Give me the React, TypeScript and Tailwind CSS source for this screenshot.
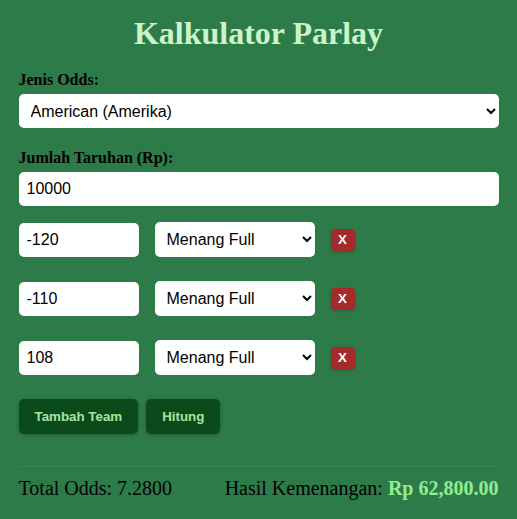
import { useState } from "react";

type Team = { odds: string; status: string };

const initialTeams: Team[] = [
  { odds: "-120", status: "full" },
  { odds: "-110", status: "full" },
  { odds: "108", status: "full" },
];

function StatusSelect({ value, onChange }: { value: string; onChange: (v: string) => void }) {
  return (
    <select
      value={value}
      onChange={(e) => onChange(e.target.value)}
      className="w-[160px] h-[35px] px-2 rounded-[5px] bg-white text-black text-[16px] font-['Liberation_Sans',Arial,sans-serif] outline-none"
    >
      <option value="full">Menang Full</option>
      <option value="half">Menang Setengah</option>
      <option value="draw">Seri</option>
      <option value="halflose">Kalah Setengah</option>
      <option value="lose">Kalah Full</option>
    </select>
  );
}

export default function App() {
  const [oddsType, setOddsType] = useState("american");
  const [stake, setStake] = useState("10000");
  const [teams, setTeams] = useState<Team[]>(initialTeams);

  const update = (i: number, patch: Partial<Team>) =>
    setTeams((t) => t.map((x, j) => (j === i ? { ...x, ...patch } : x)));

  return (
    <div className="min-h-screen bg-[#2e7b4a] font-['Liberation_Serif','Times_New_Roman',serif] text-black">
      <div className="w-[480px] mx-auto pt-[15px] pb-4">
        {/* Title */}
        <h1 className="text-[32px] leading-[37px] font-bold text-center text-[#c9f5c8]">
          Kalkulator Parlay
        </h1>

        {/* Odds type */}
        <label className="block mt-[19px] mb-[5px] text-[16px] leading-[18px] font-bold">
          Jenis Odds:
        </label>
        <select
          value={oddsType}
          onChange={(e) => setOddsType(e.target.value)}
          className="w-full h-[34px] px-2 rounded-[5px] bg-white text-black text-[16px] font-['Liberation_Sans',Arial,sans-serif] outline-none"
        >
          <option value="american">American (Amerika)</option>
          <option value="decimal">Decimal (Eropa)</option>
          <option value="hongkong">Hong Kong</option>
          <option value="malay">Malay</option>
          <option value="indo">Indonesia</option>
        </select>

        {/* Stake */}
        <label className="block mt-[21px] mb-[5px] text-[16px] leading-[18px] font-bold">
          Jumlah Taruhan (Rp):
        </label>
        <input
          value={stake}
          onChange={(e) => setStake(e.target.value)}
          className="block w-full h-[34px] px-2 rounded-[5px] bg-white text-black text-[16px] font-['Liberation_Sans',Arial,sans-serif] outline-none"
        />

        {/* Teams */}
        <div className="mt-[16px] flex flex-col gap-[24px]">
          {teams.map((team, i) => (
            <div key={i} className="flex items-center gap-4">
              <input
                value={team.odds}
                onChange={(e) => update(i, { odds: e.target.value })}
                className="w-[120px] h-[34px] px-2 rounded-[5px] bg-white text-black text-[16px] font-['Liberation_Sans',Arial,sans-serif] outline-none"
              />
              <StatusSelect value={team.status} onChange={(v) => update(i, { status: v })} />
              <button
                onClick={() => setTeams((t) => t.filter((_, j) => j !== i))}
                className="w-[24px] h-[22px] flex items-center justify-center rounded-[4px] bg-[#a52a2a] text-white text-[13.33px] font-bold font-['Liberation_Sans',Arial,sans-serif] shadow-[0_1px_3px_rgba(0,0,0,0.25)]"
              >
                X
              </button>
            </div>
          ))}
        </div>

        {/* Actions */}
        <div className="mt-[24px] flex gap-2">
          <button
            onClick={() => setTeams((t) => [...t, { odds: "", status: "full" }])}
            className="h-[35px] px-4 rounded-[5px] bg-[#0b4a1b] text-[#a6e6a0] text-[13.33px] font-bold font-['Liberation_Sans',Arial,sans-serif] shadow-[0_1px_4px_rgba(0,0,0,0.25)]"
          >
            Tambah Team
          </button>
          <button className="h-[35px] px-4 rounded-[5px] bg-[#0b4a1b] text-[#a6e6a0] text-[13.33px] font-bold font-['Liberation_Sans',Arial,sans-serif] shadow-[0_1px_4px_rgba(0,0,0,0.25)]">
            Hitung
          </button>
        </div>

        {/* Result */}
        <div className="mt-[32px] border-t border-[#3c8757] pt-[10px] flex justify-between text-[20px] leading-[23px]">
          <span>Total Odds: 7.2800</span>
          <span>
            Hasil Kemenangan: <b className="text-[#90ee90]">Rp 62,800.00</b>
          </span>
        </div>
      </div>
    </div>
  );
}
